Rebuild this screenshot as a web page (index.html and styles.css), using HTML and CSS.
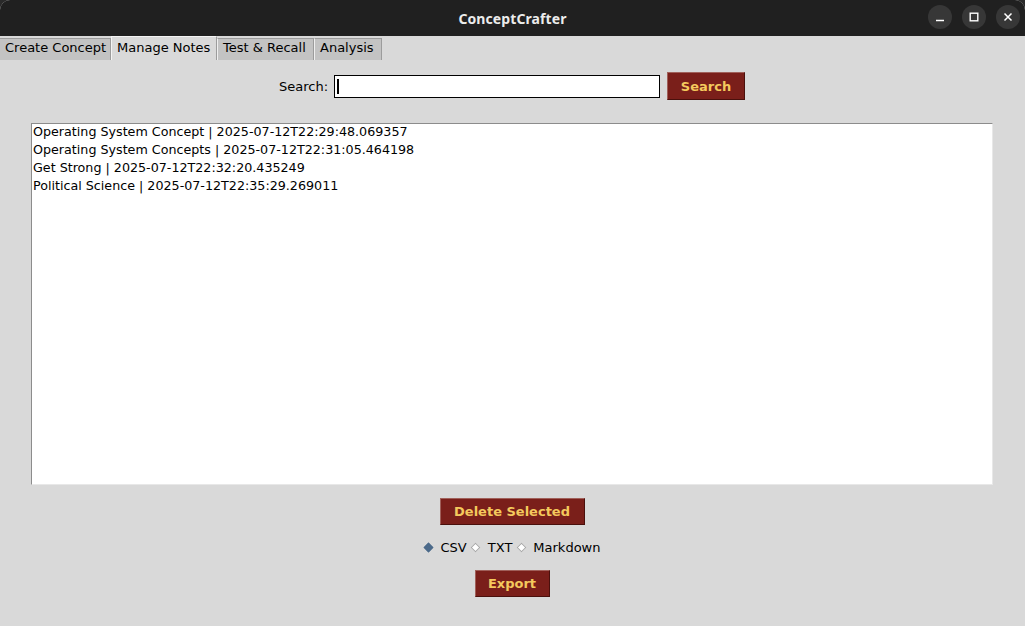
FILE: index.html
```html
<!DOCTYPE html>
<html>
<head>
<meta charset="utf-8">
<title>ConceptCrafter</title>
<link rel="stylesheet" href="styles.css">
</head>
<body>
<div class="window">
  <header class="titlebar">
    <div class="title">ConceptCrafter</div>
    <div class="controls">
      <span class="ctl"><svg width="12" height="12" viewBox="0 0 12 12"><path d="M2 9.5h8" stroke="#fff" stroke-width="1.4"/></svg></span>
      <span class="ctl"><svg width="12" height="12" viewBox="0 0 12 12"><rect x="2.2" y="2.2" width="7.6" height="7.6" fill="none" stroke="#fff" stroke-width="1.4"/></svg></span>
      <span class="ctl"><svg width="12" height="12" viewBox="0 0 12 12"><path d="M2.5 2.5l7 7M9.5 2.5l-7 7" stroke="#fff" stroke-width="1.5"/></svg></span>
    </div>
  </header>
  <nav class="tabs">
    <div class="tab tab-create">Create Concept</div>
    <div class="tab tab-manage active">Manage Notes</div>
    <div class="tab tab-test">Test &amp; Recall</div>
    <div class="tab tab-analysis">Analysis</div>
  </nav>
  <main class="content">
    <div class="search-row">
      <label class="label">Search:</label>
      <div class="entry"><span class="caret"></span></div>
      <button class="btn btn-search">Search</button>
    </div>
    <div class="listbox">
      <div class="item">Operating System Concept | 2025-07-12T22:29:48.069357</div>
      <div class="item">Operating System Concepts | 2025-07-12T22:31:05.464198</div>
      <div class="item">Get Strong | 2025-07-12T22:32:20.435249</div>
      <div class="item">Political Science | 2025-07-12T22:35:29.269011</div>
    </div>
    <button class="btn btn-delete">Delete Selected</button>
    <div class="radios">
      <span class="radio"><span class="dia on"></span>CSV</span>
      <span class="radio"><span class="dia"></span>TXT</span>
      <span class="radio"><span class="dia"></span>Markdown</span>
    </div>
    <button class="btn btn-export">Export</button>
  </main>
</div>
</body>
</html>
```

FILE: styles.css
```css
html, body {
  margin: 0;
  padding: 0;
  background: #2a2a2a;
}
body {
  width: 1025px;
  height: 626px;
  overflow: hidden;
  font-family: "DejaVu Sans", "Liberation Sans", sans-serif;
  font-size: 13px;
  color: #000;
}
.window {
  width: 1025px;
  height: 626px;
  background: #d9d9d9;
  display: flex;
  flex-direction: column;
  border-radius: 10px 10px 0 0;
  overflow: hidden;
}
.titlebar {
  height: 36px;
  flex: none;
  background: #202020;
  display: flex;
  align-items: center;
  justify-content: center;
  position: relative;
}
.title {
  color: #ececec;
  font-family: "Noto Sans", "DejaVu Sans", sans-serif;
  font-weight: bold;
  font-size: 14px;
  letter-spacing: 0.1px;
}
.controls {
  position: absolute;
  right: 5px;
  top: 5px;
  display: flex;
  gap: 10px;
}
.ctl {
  width: 24px;
  height: 24px;
  border-radius: 50%;
  background: #373737;
  display: flex;
  align-items: center;
  justify-content: center;
}
.tabs {
  height: 24px;
  flex: none;
  display: flex;
  align-items: flex-end;
  background: #d9d9d9;
}
.tab {
  height: 22px;
  box-sizing: border-box;
  padding: 0 0 0 5px;
  background: #c3c3c3;
  border: 1px solid #9c9c9c;
  border-bottom: none;
  border-left-color: #efefef;
  font-size: 13px;
  line-height: 18px;
  white-space: nowrap;
  overflow: hidden;
  flex: none;
}
.tab-create { width: 111px; border-left: none; }
.tab-manage { width: 106px; }
.tab-test { width: 97px; }
.tab-analysis { width: 68px; }
.tab.active {
  height: 24px;
  padding-top: 2px;
  background: #d9d9d9;
  border-left-color: #f4f4f4;
  border-top-color: #f4f4f4;
}
.content {
  flex: 1;
  display: flex;
  flex-direction: column;
  align-items: center;
  padding: 12px 32px 0 31px;
}
.search-row {
  display: flex;
  align-items: center;
  height: 28px;
}
.label {
  margin-right: 6px;
}
.entry {
  width: 326px;
  height: 23px;
  box-sizing: border-box;
  background: #fff;
  border: 1px solid #000;
  display: flex;
  align-items: center;
  padding-left: 2px;
}
.caret {
  width: 2px;
  height: 15px;
  background: #000;
}
.btn {
  font-family: "DejaVu Sans", "Liberation Sans", sans-serif;
  font-weight: bold;
  font-size: 13px;
  color: #f4c95d;
  background: #7a1f1a;
  border: 1px solid;
  border-color: #a0605a #4a100c #4a100c #a0605a;
  padding: 0;
  margin: 0;
  box-sizing: border-box;
}
.btn-search {
  width: 78px;
  height: 28px;
  margin-left: 7px;
}
.listbox {
  align-self: stretch;
  margin-top: 23px;
  height: 362px;
  box-sizing: border-box;
  background: #fff;
  border: 1px solid;
  border-color: #8c8c8c #e8e8e8 #e8e8e8 #8c8c8c;
  padding: 0 1px;
  font-size: 12.7px;
}
.item {
  line-height: 15px;
  height: 18px;
  white-space: nowrap;
}
.btn-delete {
  margin-top: 13px;
  width: 145px;
  height: 27px;
}
.radios {
  display: flex;
  align-items: center;
  gap: 4px;
  margin-top: 12px;
  height: 20px;
}
.radio {
  display: flex;
  align-items: center;
  gap: 7px;
}
.dia {
  flex: none;
  width: 7px;
  height: 7px;
  box-sizing: border-box;
  background: #fff;
  border: 1px solid #a8a8a8;
  transform: rotate(45deg);
  margin: 0 1.5px;
}
.dia.on {
  background: #4c6a8a;
  border-color: #4c6a8a;
}
.btn-export {
  margin-top: 13px;
  width: 75px;
  height: 27px;
}
```
